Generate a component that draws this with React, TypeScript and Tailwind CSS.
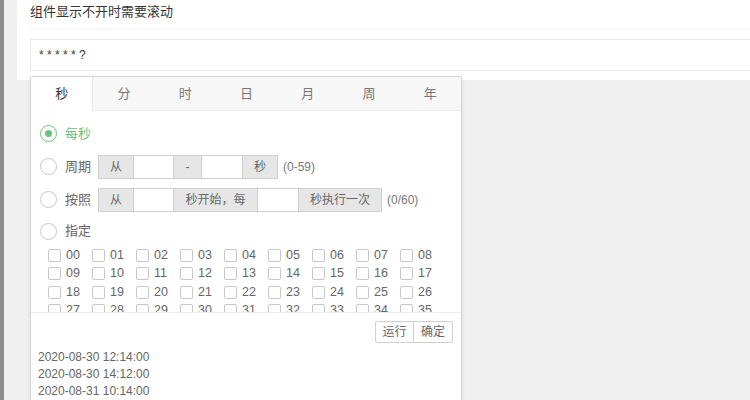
import React from "react";

const tabs = ["秒", "分", "时", "日", "月", "周", "年"];
const nums = Array.from({ length: 36 }, (_, i) => String(i).padStart(2, "0"));

function Radio({ checked }: { checked?: boolean }) {
  return (
    <span
      className={
        "w-[17px] h-[17px] rounded-full border flex items-center justify-center bg-white shrink-0 " +
        (checked ? "border-[#6fbf7f]" : "border-[#c8c8c8]")
      }
    >
      {checked && <span className="w-[7px] h-[7px] rounded-full bg-[#6fbf7f]" />}
    </span>
  );
}

function Addon({ children, w }: { children: React.ReactNode; w: string }) {
  return (
    <span className={"h-full flex items-center justify-center bg-[#e6e6e6] border border-[#cfcfcf] -ml-px first:ml-0 text-[#666] " + w}>
      {children}
    </span>
  );
}

function Field({ w }: { w: string }) {
  return <span className={"h-full bg-white border border-[#cfcfcf] -ml-px " + w} />;
}

export default function App() {
  return (
    <div
      className="w-[750px] h-[400px] flex bg-[#f0f0f0] overflow-hidden text-[13px]"
      style={{ fontFamily: '"Liberation Sans", "Noto Sans CJK SC", sans-serif' }}
    >
      <div className="w-[4px] bg-[#8e8e8e] shrink-0" />
      <div className="flex-1 pl-[13px] relative">
        <div className="bg-white h-[80px] pl-[13px]">
          <div className="h-[29px] border-b border-[#f5f5f5] pt-[3px] text-[#333] leading-[18px]">
            组件显示不开时需要滚动
          </div>
          <div className="pt-[10px]">
            <div className="h-[32px] border border-[#e8e8e8] border-r-0 pl-[8px] flex items-center text-[12px] text-[#333]">
              * * * * * ?
            </div>
          </div>
        </div>

        <div className="absolute top-[76px] left-[26px] w-[432px] h-[340px] bg-white border border-[#d6d6d6] rounded-[2px] shadow-[0_1px_4px_rgba(0,0,0,0.08)]">
          <div className="flex h-[34px] bg-[#f7f7f7]">
            {tabs.map((t, i) => (
              <div
                key={t}
                className={
                  "flex-1 flex items-center justify-center " +
                  (i === 0
                    ? "bg-white text-[#333] border-r border-[#e6e6e6]"
                    : "text-[#777] border-b border-[#eeeeee]")
                }
              >
                {t}
              </div>
            ))}
          </div>

          <div className="h-[201px] overflow-hidden pt-[6px] pl-[9px] text-[#666]">
            <div className="h-[33px] flex items-center gap-[8px]">
              <Radio checked />
              <span className="text-[#6fbf7f]">每秒</span>
            </div>
            <div className="h-[33px] flex items-center">
              <Radio />
              <span className="ml-[8px] w-[33px]">周期</span>
              <span className="flex items-center h-[24px] text-[12px]">
                <Addon w="w-[36px]">从</Addon>
                <Field w="w-[41px]" />
                <Addon w="w-[29px]">-</Addon>
                <Field w="w-[42px]" />
                <Addon w="w-[36px]">秒</Addon>
              </span>
              <span className="ml-[5px] text-[12px] text-[#777]">(0-59)</span>
            </div>
            <div className="h-[33px] flex items-center">
              <Radio />
              <span className="ml-[8px] w-[33px]">按照</span>
              <span className="flex items-center h-[24px] text-[12px]">
                <Addon w="w-[36px]">从</Addon>
                <Field w="w-[41px]" />
                <Addon w="w-[85px]">秒开始，每</Addon>
                <Field w="w-[42px]" />
                <Addon w="w-[84px]">秒执行一次</Addon>
              </span>
              <span className="ml-[5px] text-[12px] text-[#777]">(0/60)</span>
            </div>
            <div className="h-[30px] flex items-center gap-[8px]">
              <Radio />
              <span>指定</span>
            </div>
            <div className="pl-[8px] grid grid-cols-[repeat(9,44px)]">
              {nums.map((n) => (
                <div key={n} className="h-[18.5px] flex items-center">
                  <span className="w-[13px] h-[13px] border border-[#c8c8c8] rounded-[2px] bg-white shrink-0" />
                  <span className="ml-[5px] text-[12.5px] text-[#666]">{n}</span>
                </div>
              ))}
            </div>
          </div>

          <div className="border-t border-[#ececec] pt-[8px] pr-[8px] flex justify-end">
            <div className="flex h-[22px] text-[12px] text-[#666]">
              <span className="w-[39px] flex items-center justify-center border border-[#d0d0d0] rounded-l-[2px] bg-white">运行</span>
              <span className="w-[40px] -ml-px flex items-center justify-center border border-[#d0d0d0] rounded-r-[2px] bg-white">确定</span>
            </div>
          </div>
          <div className="pt-[6px] pl-[7px] text-[12px] leading-[17px] text-[#666]">
            <div>2020-08-30 12:14:00</div>
            <div>2020-08-30 14:12:00</div>
            <div>2020-08-31 10:14:00</div>
          </div>
        </div>
      </div>
    </div>
  );
}
